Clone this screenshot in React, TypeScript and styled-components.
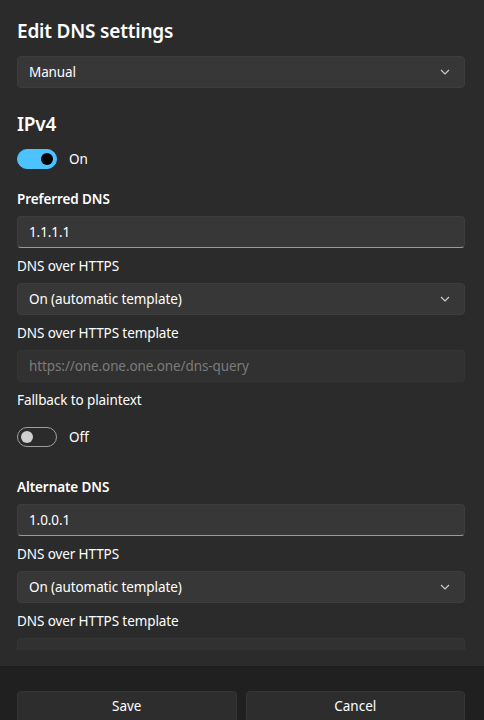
import React from "react";
import styled, { createGlobalStyle } from "styled-components";

const Global = createGlobalStyle`
  html, body { margin: 0; padding: 0; background: #2b2b2b; }
  body { font-family: "Noto Sans", "Open Sans", sans-serif; color: #ffffff; }
  * { box-sizing: border-box; }
`;

const Page = styled.div`
  width: 484px;
  height: 720px;
  display: flex;
  flex-direction: column;
  background: #2b2b2b;
  overflow: hidden;
`;

const Scroll = styled.div`
  flex: 1;
  min-height: 0;
  overflow: hidden;
  padding: 17px 19px 0 17px;
  display: flex;
  flex-direction: column;
`;

const BottomGap = styled.div`
  height: 16px;
  flex: none;
`;

const Title = styled.h1`
  margin: 0 0 11px 0;
  font-size: 19px;
  line-height: 28px;
  font-weight: 600;
  letter-spacing: -0.2px;
`;

const Heading = styled.h2`
  margin: 22px 0 11px 0;
  font-size: 19px;
  line-height: 28px;
  font-weight: 600;
  letter-spacing: -0.2px;
`;

const Label = styled.div<{ $bold?: boolean; $top?: number }>`
  flex: none;
  font-size: 13.5px;
  line-height: 20px;
  font-weight: ${(p) => (p.$bold ? 600 : 400)};
  margin-top: ${(p) => p.$top ?? 8}px;
  margin-bottom: 7px;
  letter-spacing: -0.1px;
`;

const Select = styled.div`
  flex: none;
  height: 32px;
  border-radius: 4px;
  background: #373737;
  border: 1px solid #3d3d3d;
  display: flex;
  align-items: center;
  justify-content: space-between;
  padding: 0 14px 0 11px;
  font-size: 13.5px;
  letter-spacing: -0.1px;
`;

const Input = styled.div<{ $disabled?: boolean }>`
  flex: none;
  height: 32px;
  border-radius: 4px;
  background: ${(p) => (p.$disabled ? "#313131" : "#373737")};
  border: 1px solid ${(p) => (p.$disabled ? "#353535" : "#3d3d3d")};
  border-bottom: 1px solid ${(p) => (p.$disabled ? "#353535" : "#9a9a9a")};
  display: flex;
  align-items: center;
  padding: 0 11px;
  font-size: 13.5px;
  letter-spacing: -0.1px;
  color: ${(p) => (p.$disabled ? "#7b7b7b" : "#ffffff")};
`;

const ToggleRow = styled.div<{ $top?: number }>`
  flex: none;
  display: flex;
  align-items: center;
  gap: 12px;
  height: 20px;
  margin-top: ${(p) => p.$top ?? 0}px;
  font-size: 13.5px;
`;

const Track = styled.div<{ $on?: boolean }>`
  width: 40px;
  height: 20px;
  border-radius: 10px;
  background: ${(p) => (p.$on ? "#4cc2ff" : "transparent")};
  border: 1px solid ${(p) => (p.$on ? "#4cc2ff" : "#9f9f9f")};
  display: flex;
  align-items: center;
  justify-content: ${(p) => (p.$on ? "flex-end" : "flex-start")};
  padding: 0 3px;
`;

const Knob = styled.div<{ $on?: boolean }>`
  width: 12px;
  height: 12px;
  border-radius: 50%;
  background: ${(p) => (p.$on ? "#000000" : "#cfcfcf")};
`;

const Footer = styled.div`
  height: 54px;
  flex: none;
  background: #202020;
  border-top: 1px solid #1d1d1d;
  padding: 24px 19px 0 17px;
  display: grid;
  grid-template-columns: 1fr 1fr;
  gap: 9px;
`;

const Button = styled.div`
  height: 32px;
  border-radius: 4px;
  background: #2d2d2d;
  border: 1px solid #353535;
  display: flex;
  align-items: center;
  justify-content: center;
  font-size: 13.5px;
  padding-bottom: 2px;
`;

const Chevron = () => (
  <svg width="10" height="6" viewBox="0 0 10 6">
    <path d="M1 1 L5 5 L9 1" fill="none" stroke="#d0d0d0" strokeWidth="1.1" />
  </svg>
);

const Dropdown = ({ value }: { value: string }) => (
  <Select>
    <span>{value}</span>
    <Chevron />
  </Select>
);

const Toggle = ({ on, top }: { on: boolean; top?: number }) => (
  <ToggleRow $top={top}>
    <Track $on={on}>
      <Knob $on={on} />
    </Track>
    <span>{on ? "On" : "Off"}</span>
  </ToggleRow>
);

export default function App() {
  return (
    <Page>
      <Global />
      <Scroll>
        <Title>Edit DNS settings</Title>
        <Dropdown value="Manual" />
        <Heading>IPv4</Heading>
        <Toggle on />
        <Label $bold $top={20}>Preferred DNS</Label>
        <Input>1.1.1.1</Input>
        <Label>DNS over HTTPS</Label>
        <Dropdown value="On (automatic template)" />
        <Label>DNS over HTTPS template</Label>
        <Input $disabled>https://one.one.one.one/dns-query</Input>
        <Label>Fallback to plaintext</Label>
        <Toggle on={false} top={10} />
        <Label $bold $top={30}>Alternate DNS</Label>
        <Input>1.0.0.1</Input>
        <Label>DNS over HTTPS</Label>
        <Dropdown value="On (automatic template)" />
        <Label>DNS over HTTPS template</Label>
        <Input $disabled />
      </Scroll>
      <BottomGap />
      <Footer>
        <Button>Save</Button>
        <Button>Cancel</Button>
      </Footer>
    </Page>
  );
}
